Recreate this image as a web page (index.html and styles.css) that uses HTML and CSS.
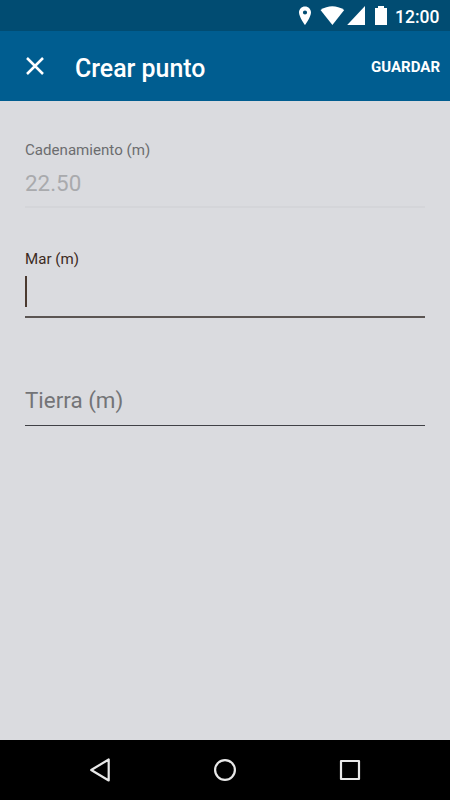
FILE: index.html
```html
<!DOCTYPE html>
<html lang="es">
<head>
<meta charset="utf-8">
<title>Crear punto</title>
<link rel="stylesheet" href="styles.css">
</head>
<body>
<div class="screen">
  <div class="status">
    <svg class="status-icons" width="100" height="31" viewBox="0 0 100 31" fill="#fff">
      <path fill-rule="evenodd" d="M15 6.500c-3.500 0-6 2.700-6 6 0 4.500 6 12.500 6 12.500s6-8 6-12.500c0-3.300-2.500-6-6-6zm0 3.900a2.100 2.100 0 1 1 0 4.200 2.100 2.100 0 0 1 0-4.200z"/>
      <path d="M30.500 10Q42.300 2.500 54.200 10L42.400 25z"/>
      <path d="M75 6V25H57.200z"/>
      <path d="M88 6h6v2h3v17H85V8h3z"/>
    </svg>
    <span class="clock">12:00</span>
  </div>
  <header class="toolbar">
    <svg class="close" width="20" height="20" viewBox="0 0 20 20" fill="none" stroke="#fff" stroke-width="2.500"><path d="M2 2l16 16M18 2L2 18"/></svg>
    <h1 class="title">Crear punto</h1>
    <span class="save">GUARDAR</span>
  </header>
  <main class="form">
    <div class="field disabled">
      <label class="label">Cadenamiento (m)</label>
      <div class="value">22.50</div>
    </div>
    <div class="field focused">
      <label class="label">Mar (m)</label>
      <div class="value"><span class="caret"></span></div>
    </div>
    <div class="field empty">
      <div class="value">Tierra (m)</div>
    </div>
  </main>
  <nav class="navbar">
    <svg width="26" height="26" viewBox="0 0 26 26"><path d="M4.200 13L21.700 2.500V23.500z"/></svg>
    <svg width="26" height="26" viewBox="0 0 26 26"><circle cx="13" cy="13" r="9.900"/></svg>
    <svg width="26" height="26" viewBox="0 0 26 26"><rect x="4" y="4" width="18" height="18"/></svg>
  </nav>
</div>
</body>
</html>
```

FILE: styles.css
```css
* {
  box-sizing: border-box;
}

body {
  margin: 0;
  font-family: Roboto, "Liberation Sans", sans-serif;
}

.screen {
  display: flex;
  flex-direction: column;
  width: 450px;
  height: 800px;
  background: #dadbdf;
}

.status {
  display: flex;
  justify-content: flex-end;
  height: 31px;
  padding-right: 10px;
  background: #014c72;
}

.status-icons {
  margin-right: 5px;
}

.clock {
  width: 45px;
  font-size: 17.500px;
  font-weight: 500;
  line-height: 34px;
  color: #fff;
  white-space: nowrap;
}

.toolbar {
  display: flex;
  align-items: center;
  height: 70px;
  padding: 0 10px 0 25px;
  background: #005d90;
  color: #fff;
}

.close {
  margin-right: 30px;
}

.title {
  margin: 5px 0 0;
  font-size: 24.900px;
  font-weight: 500;
  line-height: 30px;
}

.save {
  margin: 1px 0 0 auto;
  font-size: 15px;
  font-weight: 700;
  line-height: 20px;
}

.form {
  flex: 1;
  padding: 39px 25px 0;
}

.field {
  border-bottom: 1px solid #404146;
}

.label {
  display: block;
  font-size: 15.100px;
  line-height: 20px;
}

.value {
  font-size: 22.400px;
  line-height: 30px;
}

.disabled {
  height: 68px;
  border-bottom: 2px solid #d4d5d9;
}

.disabled .label {
  color: #6c6d6f;
}

.disabled .value {
  padding-top: 8px;
  color: #a9aaad;
}

.focused {
  height: 69px;
  margin-top: 41px;
  border-bottom: 2px solid #5b5553;
}

.focused .label {
  color: #3c2a22;
}

.focused .value {
  padding-top: 7px;
}

.caret {
  display: block;
  width: 2px;
  height: 31px;
  background: #4b3a30;
}

.empty {
  height: 41px;
  margin-top: 67px;
}

.empty .value {
  color: #737477;
}

.navbar {
  display: flex;
  gap: 99px;
  height: 60px;
  padding: 17px 0 0 87px;
  background: #000;
}

.navbar svg {
  fill: none;
  stroke: #e8e8e8;
  stroke-width: 2.200;
  stroke-linejoin: round;
}
```
